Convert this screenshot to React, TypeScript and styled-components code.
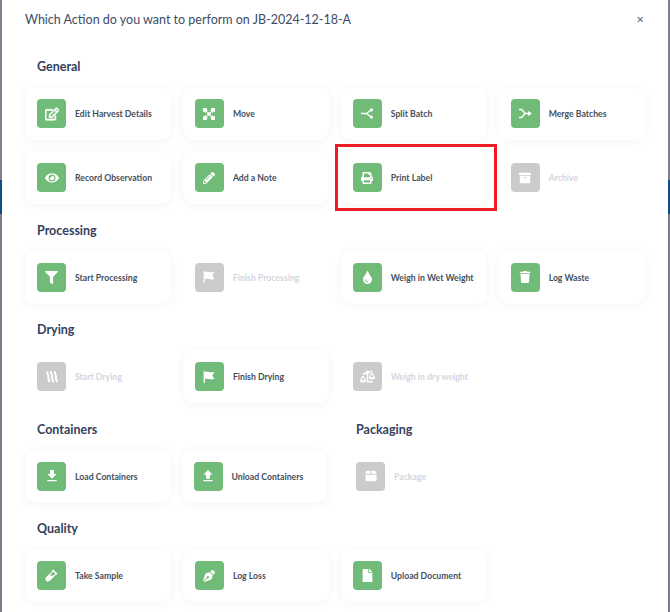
import styled, { createGlobalStyle } from 'styled-components';
import { ReactNode } from 'react';
import {
  FaArchive, FaBalanceScaleLeft, FaEye, FaFile, FaFilter, FaPenNib,
  FaPencilAlt, FaPrint, FaRegEdit, FaTint, FaTrash, FaVial,
} from 'react-icons/fa';
import { MdFileDownload, MdFileUpload } from 'react-icons/md';

const MoveIcon = () => (
  <svg width="12" height="12" viewBox="0 0 12 12" fill="#fff">
    <path d="M0 0h4.4L3.3 1.1l1.6 1.6-2.2 2.2-1.6-1.6L0 4.4zM12 0v4.4l-1.1-1.1-1.6 1.6-2.2-2.2 1.6-1.6L7.6 0zM0 12V7.6l1.1 1.1 1.6-1.6 2.2 2.2-1.6 1.6L4.4 12zM12 12H7.6l1.1-1.1-1.6-1.6 2.2-2.2 1.6 1.6L12 7.6z" />
    <rect x="4.2" y="4.2" width="3.6" height="3.6" />
  </svg>
);

const SplitIcon = () => (
  <svg width="13" height="11" viewBox="0 0 13 11" fill="none" stroke="#fff" strokeWidth="1.3">
    <path d="M0 5.5h5.5L10 2M5.5 5.5L10 9" />
    <circle cx="10.4" cy="1.9" r="1.6" fill="#fff" stroke="none" />
    <circle cx="10.4" cy="9.1" r="1.6" fill="#fff" stroke="none" />
  </svg>
);

const MergeIcon = () => (
  <svg width="13" height="11" viewBox="0 0 13 11" fill="none" stroke="#fff" strokeWidth="1.4">
    <path d="M0 1.5h2.6l3.6 4-3.6 4H0M6 5.5h3.5" />
    <path d="M9 3l4 2.5L9 8z" fill="#fff" stroke="none" />
  </svg>
);

const HeatIcon = () => (
  <svg width="12" height="12" viewBox="0 0 12 12" fill="none" stroke="#fff" strokeWidth="2" strokeLinecap="round">
    <path d="M1.4 1.2c-.5 1.8 1.5 2.8.9 4.6-.3 1.2.6 2.7 1 4.6M5.200 1c-.5 1.900 1.500 2.900.9 4.800-.3 1.200.6 2.900 1 4.800M9 1.200c-.5 1.800 1.500 2.800.9 4.600-.3 1.200.6 2.700 1 4.600" />
  </svg>
);

const FlagIcon = () => (
  <svg width="12" height="12" viewBox="0 0 12 12" fill="#fff">
    <path d="M.6 0h1.3v12H.6z" />
    <path d="M1.9 1c3-1 4.600.9 9.700 0L9.300 4.500l2.300 3.600c-5 1-6.700-1-9.700 0z" />
  </svg>
);

const PackageIcon = () => (
  <svg width="12" height="12" viewBox="0 0 14 14" fill="#fff">
    <path d="M2.800 1h3.600v3.400H.6C.7 2.500 1.400 1 2.800 1zM7.600 1h3.600c1.400 0 2.100 1.500 2.200 3.400H7.600zM.5 5.600h13V11c0 1.200-.9 2-2 2h-9c-1.100 0-2-.8-2-2z" />
  </svg>
);

type Action = { label: string; icon: ReactNode; disabled?: boolean; marked?: boolean };

const general: Action[] = [
  { label: 'Edit Harvest Details', icon: <FaRegEdit size={14} stroke="currentColor" strokeWidth={24} /> },
  { label: 'Move', icon: <MoveIcon /> },
  { label: 'Split Batch', icon: <SplitIcon /> },
  { label: 'Merge Batches', icon: <MergeIcon /> },
  { label: 'Record Observation', icon: <FaEye size={14} /> },
  { label: 'Add a Note', icon: <FaPencilAlt size={12} /> },
  { label: 'Print Label', icon: <FaPrint size={12} />, marked: true },
  { label: 'Archive', icon: <FaArchive size={12} />, disabled: true },
];

const processing: Action[] = [
  { label: 'Start Processing', icon: <FaFilter size={13} /> },
  { label: 'Finish Processing', icon: <FlagIcon />, disabled: true },
  { label: 'Weigh in Wet Weight', icon: <FaTint size={13} /> },
  { label: 'Log Waste', icon: <FaTrash size={12} /> },
];

const drying: Action[] = [
  { label: 'Start Drying', icon: <HeatIcon />, disabled: true },
  { label: 'Finish Drying', icon: <FlagIcon /> },
  { label: 'Weigh in dry weight', icon: <FaBalanceScaleLeft size={15} />, disabled: true },
];

const containers: Action[] = [
  { label: 'Load Containers', icon: <MdFileDownload size={16} /> },
  { label: 'Unload Containers', icon: <MdFileUpload size={16} /> },
];

const packaging: Action[] = [{ label: 'Package', icon: <PackageIcon />, disabled: true }];

const quality: Action[] = [
  { label: 'Take Sample', icon: <FaVial size={13} /> },
  { label: 'Log Loss', icon: <FaPenNib size={12} /> },
  { label: 'Upload Document', icon: <FaFile size={13} /> },
];

const GlobalStyle = createGlobalStyle`
  html, body {
    margin: 0;
    height: 612px;
    overflow: hidden;
    font-family: Lato, "Noto Sans", sans-serif;
  }
`;

const Page = styled.div`
  display: flex;
  width: 670px;
  height: 612px;
`;

const Gutter = styled.div`
  width: 2px;
  background: linear-gradient(
    to bottom,
    #80808e 0,
    #80808e 180px,
    #0f4c86 180px,
    #0f4c86 214px,
    #7b7b8a 214px
  );
`;

const Modal = styled.div`
  flex: 1;
  background: #fff;
  padding: 0 23px;
  overflow: hidden;
`;

const Header = styled.div`
  display: flex;
  align-items: center;
  justify-content: space-between;
  height: 38px;
  padding-right: 1px;
`;

const Title = styled.h2`
  margin: 0;
  font-size: 12.5px;
  font-weight: 400;
  color: #3d4d66;
`;

const Close = styled.span`
  font-size: 13px;
  line-height: 1;
  color: #5c6675;
  font-family: "Noto Sans", sans-serif;
`;

const Body = styled.div`
  padding-top: 20px;
  display: flex;
  flex-direction: column;
`;

const Section = styled.section`
  margin-bottom: 17.5px;
`;

const Heading = styled.h3`
  margin: 0 0 12px 12px;
  font-size: 12.5px;
  line-height: 17px;
  font-weight: 700;
  color: #33415c;
`;

const Grid = styled.div<{ $cols: number; $gap: number }>`
  display: grid;
  grid-template-columns: repeat(${(p) => p.$cols}, minmax(0, 1fr));
  gap: 11px ${(p) => p.$gap}px;
`;

const SplitRow = styled.div`
  display: grid;
  grid-template-columns: 302px 145px;
  column-gap: 17px;
`;

const Card = styled.div<{ $disabled?: boolean }>`
  position: relative;
  display: flex;
  align-items: center;
  gap: 9px;
  height: 53px;
  padding: 0 12px;
  border-radius: 10px;
  background: #fff;
  box-shadow: ${(p) => (p.$disabled ? 'none' : '0 1px 8px rgba(60, 70, 90, 0.06)')};
`;

const Marker = styled.div`
  position: absolute;
  inset: -7px -10px -7px -6px;
  border: 3px solid #ed1c24;
`;

const IconBox = styled.div<{ $disabled?: boolean }>`
  flex: none;
  display: flex;
  align-items: center;
  justify-content: center;
  width: 29px;
  height: 29px;
  border-radius: 4px;
  color: #fff;
  background: ${(p) => (p.$disabled ? '#cbcbcb' : '#71bb78')};
`;

const Label = styled.span<{ $disabled?: boolean }>`
  font-size: 8.7px;
  font-weight: 700;
  white-space: nowrap;
  color: ${(p) => (p.$disabled ? '#d3d6de' : '#454f5e')};
`;

const ActionCard = ({ label, icon, disabled, marked }: Action) => (
  <Card $disabled={disabled}>
    <IconBox $disabled={disabled}>{icon}</IconBox>
    <Label $disabled={disabled}>{label}</Label>
    {marked && <Marker />}
  </Card>
);

const ActionGrid = ({ items, cols, gap = 11.5 }: { items: Action[]; cols: number; gap?: number }) => (
  <Grid $cols={cols} $gap={gap}>
    {items.map((item) => (
      <ActionCard key={item.label} {...item} />
    ))}
  </Grid>
);

export default function App() {
  return (
    <Page>
      <GlobalStyle />
      <Gutter />
      <Modal>
        <Header>
          <Title>Which Action do you want to perform on JB-2024-12-18-A</Title>
          <Close>×</Close>
        </Header>
        <Body>
          <Section>
            <Heading>General</Heading>
            <ActionGrid items={general} cols={4} />
          </Section>
          <Section>
            <Heading>Processing</Heading>
            <ActionGrid items={processing} cols={4} />
          </Section>
          <Section>
            <Heading>Drying</Heading>
            <ActionGrid items={drying} cols={4} />
          </Section>
          <SplitRow>
            <Section>
              <Heading>Containers</Heading>
              <ActionGrid items={containers} cols={2} gap={11} />
            </Section>
            <Section>
              <Heading>Packaging</Heading>
              <ActionGrid items={packaging} cols={1} />
            </Section>
          </SplitRow>
          <Section>
            <Heading>Quality</Heading>
            <ActionGrid items={quality} cols={4} />
          </Section>
        </Body>
      </Modal>
      <Gutter />
    </Page>
  );
}
